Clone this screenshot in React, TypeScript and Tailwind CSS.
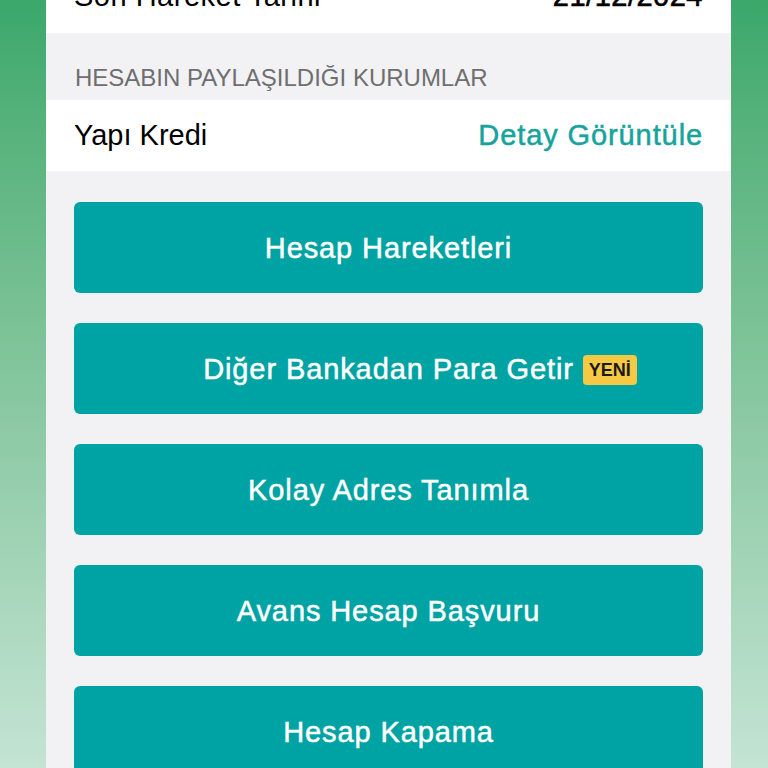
import React from "react";

const font = { fontFamily: '"Liberation Sans", Arial, sans-serif' };

function Btn({ label, badge }: { label: string; badge?: boolean }) {
  return (
    <div className="h-[91px] rounded-[6px] bg-[#00a3a3] flex items-center justify-center">
      <span className="relative text-white text-[29px] tracking-[0.9px] [-webkit-text-stroke:0.5px_white] translate-y-[1px]">
        {label}
        {badge && (
          <span className="absolute left-[calc(100%+9px)] top-1/2 -translate-y-1/2 h-[30px] w-[54px] flex items-center justify-center bg-[#f6c944] text-[#1a1a1a] text-[18px] font-bold tracking-[0px] [-webkit-text-stroke:0px] leading-none rounded-[4px]">
            YENİ
          </span>
        )}
      </span>
    </div>
  );
}

export default function App() {
  return (
    <div
      className="w-[768px] h-[768px] overflow-hidden bg-gradient-to-b from-[#3aa86a] to-[#c4e4d4] flex"
      style={font}
    >
      <div className="w-[685px] h-full bg-[#f2f2f4] flex flex-col ml-[46px]">
        <div className="h-[33px] bg-white overflow-hidden flex flex-col justify-end shrink-0">
          <div className="flex justify-between items-center px-[28px] h-[72px] shrink-0 text-[29px] text-black">
            <span className="tracking-[0.5px]">Son Hareket Tarihi</span>
            <span className="tracking-[0.5px] [-webkit-text-stroke:0.6px_black]">21/12/2024</span>
          </div>
        </div>
        <div className="h-[67px] flex items-end px-[29px] pb-[4px] shrink-0">
          <span className="text-[24px] text-[#6e6e70] uppercase">HESABIN PAYLAŞILDIĞI KURUMLAR</span>
        </div>
        <div className="h-[71px] bg-white flex justify-between items-center px-[28px] shrink-0">
          <span className="text-[29px] text-black">Yapı Kredi</span>
          <span className="text-[29px] text-[#16a39c] tracking-[0.9px] [-webkit-text-stroke:0.5px_#16a39c]">Detay Görüntüle</span>
        </div>
        <div className="flex flex-col gap-[30px] px-[28px] pt-[31px]">
          <Btn label="Hesap Hareketleri" />
          <Btn label="Diğer Bankadan Para Getir" badge />
          <Btn label="Kolay Adres Tanımla" />
          <Btn label="Avans Hesap Başvuru" />
          <Btn label="Hesap Kapama" />
        </div>
      </div>
    </div>
  );
}
